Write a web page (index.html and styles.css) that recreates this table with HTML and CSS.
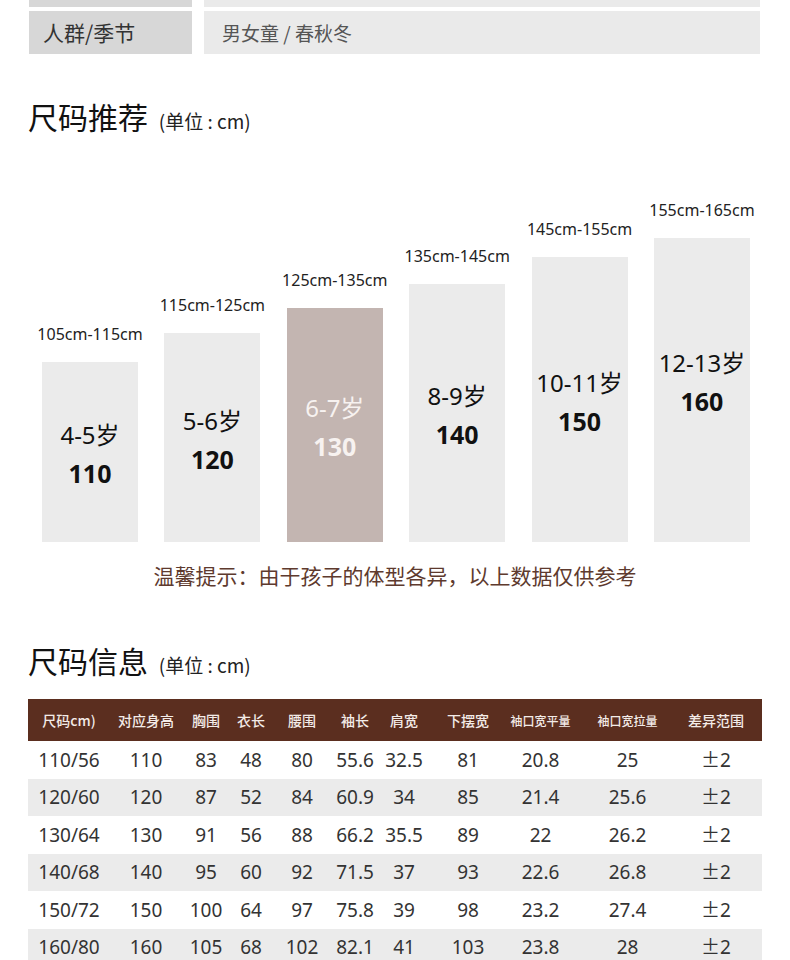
FILE: index.html
```html
<!DOCTYPE html>
<html lang="zh-CN">
<head>
<meta charset="utf-8">
<title>尺码</title>
<link rel="stylesheet" href="styles.css">
</head>
<body>
<div class="page">
  <div class="info">
    <div class="info-row info-row-cut">
      <div class="info-label"></div>
      <div class="info-value"></div>
    </div>
    <div class="info-row">
      <div class="info-label">人群/季节</div>
      <div class="info-value">男女童 / 春秋冬</div>
    </div>
  </div>

  <h2 class="title title-rec">尺码推荐 <span class="unit">(单位 : cm)</span></h2>

  <div class="chart">
    <div class="col">
      <div class="range">105cm-115cm</div>
      <div class="bar" style="height:180px"><div class="age">4-5岁</div><div class="num">110</div></div>
    </div>
    <div class="col">
      <div class="range">115cm-125cm</div>
      <div class="bar" style="height:209px"><div class="age">5-6岁</div><div class="num">120</div></div>
    </div>
    <div class="col">
      <div class="range">125cm-135cm</div>
      <div class="bar bar-active" style="height:234px"><div class="age">6-7岁</div><div class="num">130</div></div>
    </div>
    <div class="col">
      <div class="range">135cm-145cm</div>
      <div class="bar" style="height:258px"><div class="age">8-9岁</div><div class="num">140</div></div>
    </div>
    <div class="col">
      <div class="range">145cm-155cm</div>
      <div class="bar" style="height:285px"><div class="age">10-11岁</div><div class="num">150</div></div>
    </div>
    <div class="col">
      <div class="range">155cm-165cm</div>
      <div class="bar bar-top" style="height:304px"><div class="age">12-13岁</div><div class="num">160</div></div>
    </div>
  </div>

  <p class="tip">温馨提示：由于孩子的体型各异，以上数据仅供参考</p>

  <h2 class="title title-info">尺码信息 <span class="unit">(单位 : cm)</span></h2>

  <table class="size-table">
    <colgroup>
      <col class="c1"><col class="c2"><col class="c3"><col class="c4"><col class="c5"><col class="c6">
      <col class="c7"><col class="c8"><col class="c9"><col class="c10"><col class="c11">
    </colgroup>
    <thead>
      <tr>
        <th>尺码cm)</th><th>对应身高</th><th>胸围</th><th>衣长</th><th>腰围</th><th>袖长</th>
        <th>肩宽</th><th>下摆宽</th><th class="sm">袖口宽平量</th><th class="sm">袖口宽拉量</th><th class="last">差异范围</th>
      </tr>
    </thead>
    <tbody>
      <tr><td>110/56</td><td>110</td><td>83</td><td>48</td><td>80</td><td>55.6</td><td>32.5</td><td>81</td><td>20.8</td><td>25</td><td class="last"><span class="pm">±</span>2</td></tr>
      <tr><td>120/60</td><td>120</td><td>87</td><td>52</td><td>84</td><td>60.9</td><td>34</td><td>85</td><td>21.4</td><td>25.6</td><td class="last"><span class="pm">±</span>2</td></tr>
      <tr><td>130/64</td><td>130</td><td>91</td><td>56</td><td>88</td><td>66.2</td><td>35.5</td><td>89</td><td>22</td><td>26.2</td><td class="last"><span class="pm">±</span>2</td></tr>
      <tr><td>140/68</td><td>140</td><td>95</td><td>60</td><td>92</td><td>71.5</td><td>37</td><td>93</td><td>22.6</td><td>26.8</td><td class="last"><span class="pm">±</span>2</td></tr>
      <tr><td>150/72</td><td>150</td><td>100</td><td>64</td><td>97</td><td>75.8</td><td>39</td><td>98</td><td>23.2</td><td>27.4</td><td class="last"><span class="pm">±</span>2</td></tr>
      <tr><td>160/80</td><td>160</td><td>105</td><td>68</td><td>102</td><td>82.1</td><td>41</td><td>103</td><td>23.8</td><td>28</td><td class="last"><span class="pm">±</span>2</td></tr>
    </tbody>
  </table>
</div>
</body>
</html>
```

FILE: styles.css
```css
* { box-sizing: border-box; }

html, body {
  margin: 0;
  padding: 0;
  background: #ffffff;
}

body {
  font-family: "Noto Sans", "Noto Sans CJK SC", sans-serif;
  color: #222;
  width: 790px;
  height: 960px;
  overflow: hidden;
}

.page {
  padding: 0 28px;
}

/* info rows */
.info {
  display: flex;
  flex-direction: column;
  gap: 4px;
  padding-left: 1px;
  padding-right: 2px;
}

.info-row {
  display: flex;
  gap: 12px;
  height: 43px;
}

.info-row-cut {
  height: 7px;
}

.info-label {
  width: 163px;
  background: #d7d7d7;
  color: #333;
  font-size: 21px;
  line-height: 43px;
  padding-left: 14px;
  font-family: "Noto Sans CJK SC", sans-serif;
}

.info-value {
  flex: 1;
  background: #eaeaea;
  color: #555;
  font-size: 19px;
  line-height: 43px;
  padding-left: 18px;
  font-family: "Noto Sans CJK SC", sans-serif;
}

/* titles */
.title {
  margin: 0;
  font-family: "Noto Sans CJK SC", sans-serif;
  font-weight: 400;
  font-size: 30px;
  line-height: 36px;
  color: #111;
}

.title-rec {
  margin-top: 44px;
}

.title-info {
  margin-top: 52px;
}

.unit {
  font-size: 19px;
  color: #222;
  margin-left: 4px;
}

/* chart */
.chart {
  display: flex;
  justify-content: space-between;
  align-items: flex-end;
  margin: 60px 12px 0 14px;
}

.col {
  width: 96px;
  display: flex;
  flex-direction: column;
  align-items: center;
}

.range {
  font-size: 16px;
  line-height: 22px;
  color: #222;
  white-space: nowrap;
  margin-bottom: 17px;
}

.bar {
  width: 96px;
  background: #ebebeb;
  display: flex;
  flex-direction: column;
  align-items: center;
  justify-content: center;
  color: #111;
  padding-top: 6px;
}

.bar-top {
  padding-top: 0;
  padding-bottom: 14px;
}

.bar-active {
  background: #c3b5b1;
  color: #f7f2f0;
}

.age {
  font-size: 24px;
  line-height: 36px;
  font-family: "Noto Sans", "Noto Sans CJK SC", sans-serif;
}

.num {
  font-size: 25px;
  line-height: 40px;
  font-weight: 700;
}

/* tip */
.tip {
  margin: 18px 0 0;
  text-align: center;
  font-size: 21px;
  line-height: 30px;
  color: #5e3a2e;
  font-family: "Noto Sans CJK SC", sans-serif;
}

/* table */
.size-table {
  margin-top: 16px;
  width: 734px;
  border-collapse: collapse;
  table-layout: fixed;
}

.c1 { width: 82px; }
.c2 { width: 72px; }
.c3 { width: 48px; }
.c4 { width: 42px; }
.c5 { width: 60px; }
.c6 { width: 46px; }
.c7 { width: 52px; }
.c8 { width: 76px; }
.c9 { width: 69px; }
.c10 { width: 105px; }
.c11 { width: 82px; }

.size-table thead tr {
  background: #5b2e1f;
  height: 42px;
}

.size-table th {
  color: #f3ebe7;
  font-weight: 500;
  font-size: 14px;
  font-family: "Noto Sans CJK SC", sans-serif;
  text-align: center;
  padding: 0;
  white-space: nowrap;
}

.size-table th.sm {
  font-size: 12px;
}

.size-table tbody tr {
  height: 37.5px;
}

.size-table tbody tr:nth-child(even) {
  background: #ebebeb;
}

.size-table td {
  text-align: center;
  font-size: 19px;
  line-height: 26px;
  color: #333;
  padding: 0;
  white-space: nowrap;
}

.size-table .last {
  padding-right: 10px;
}

.pm {
  display: inline-block;
  width: 18px;
  margin-right: 1px;
  text-align: center;
  font-family: "Noto Sans CJK SC", sans-serif;
  font-size: 19px;
  line-height: 24px;
  vertical-align: top;
}
```
